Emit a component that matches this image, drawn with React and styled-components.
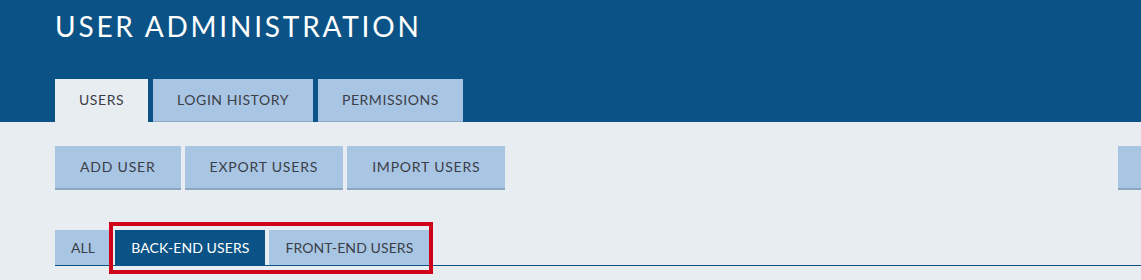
import React from "react";
import styled, { createGlobalStyle, css } from "styled-components";

const GlobalStyle = createGlobalStyle`
  body {
    margin: 0;
    background: #e8edf2;
    font-family: "Lato", "Open Sans", sans-serif;
  }
`;

const Page = styled.div`
  overflow: hidden;
  min-height: 280px;
`;

const Header = styled.header`
  background: #0b5386;
  padding: 10px 55px 0;
`;

const Title = styled.h1`
  margin: 0;
  font-size: 28px;
  line-height: 1.2;
  font-weight: 400;
  letter-spacing: 2.8px;
  color: #ffffff;
`;

const TabList = styled.nav`
  display: flex;
  gap: 5px;
  margin-top: 35px;
`;

const Tab = styled.div`
  display: flex;
  align-items: center;
  height: 43px;
  box-sizing: border-box;
  padding: 0 24px;
  font-size: 14px;
  letter-spacing: 0.55px;
  color: #3b3e47;
  background: #a8c5e3;
  border-bottom: 1px solid #8ea9c4;
  ${(p) =>
    p.$active &&
    css`
      background: #e8edf2;
      border-bottom-color: #e8edf2;
    `}
`;

const Content = styled.main`
  padding: 24px 0 0 55px;
`;

const Toolbar = styled.div`
  display: flex;
  justify-content: space-between;
`;

const ButtonGroup = styled.div`
  display: flex;
  gap: 4px;
`;

const Button = styled.button`
  height: 44px;
  padding: 0 25px;
  border: none;
  border-bottom: 2px solid #8ea7c0;
  background: #a8c5e3;
  font-family: inherit;
  font-size: 14px;
  letter-spacing: 0.8px;
  color: #3b3e47;
  white-space: nowrap;
  cursor: pointer;
  ${(p) =>
    p.$offEdge &&
    css`
      margin-right: -100px;
      width: 123px;
    `}
`;

const FilterBar = styled.div`
  position: relative;
  display: flex;
  gap: 4px;
  margin-top: 40px;
  border-bottom: 1px solid #0b5386;
`;

const FilterTab = styled.div`
  display: flex;
  align-items: center;
  height: 35px;
  padding: 0 16px;
  font-size: 14px;
  letter-spacing: 0.1px;
  color: #3b3e47;
  background: #a8c5e3;
  white-space: nowrap;
  ${(p) =>
    p.$active &&
    css`
      background: #0b5386;
      color: #ffffff;
    `}
`;

const Highlight = styled.div`
  position: absolute;
  left: 54px;
  top: -8px;
  width: 324px;
  height: 52px;
  box-sizing: border-box;
  border: 4px solid #d0021b;
  pointer-events: none;
`;

const tabs = ["USERS", "LOGIN HISTORY", "PERMISSIONS"];
const actions = ["ADD USER", "EXPORT USERS", "IMPORT USERS"];
const filters = ["ALL", "BACK-END USERS", "FRONT-END USERS"];

const App = () => {
  return (
    <Page>
      <GlobalStyle />
      <Header>
        <Title>USER ADMINISTRATION</Title>
        <TabList>
          {tabs.map((t, i) => (
            <Tab key={t} $active={i === 0}>
              {t}
            </Tab>
          ))}
        </TabList>
      </Header>
      <Content>
        <Toolbar>
          <ButtonGroup>
            {actions.map((a) => (
              <Button key={a}>{a}</Button>
            ))}
          </ButtonGroup>
          <Button $offEdge aria-label="More actions" />
        </Toolbar>
        <FilterBar>
          {filters.map((f, i) => (
            <FilterTab key={f} $active={i === 1}>
              {f}
            </FilterTab>
          ))}
          <Highlight />
        </FilterBar>
      </Content>
    </Page>
  );
};

export default App;
